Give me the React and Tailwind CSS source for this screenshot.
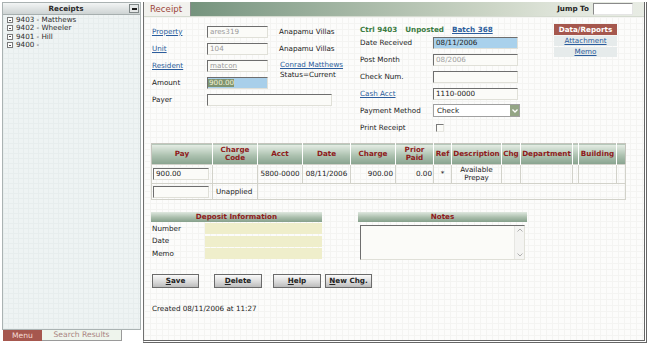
import React from "react";

const insetCls =
  "border border-t-[#6e6e6e] border-l-[#6e6e6e] border-b-[#e0e0d8] border-r-[#e0e0d8]";

function Field({ className = "", children }) {
  return (
    <div
      className={
        "h-[12px] flex items-center px-[2px] whitespace-nowrap overflow-hidden " +
        insetCls +
        " " +
        className
      }
    >
      {children}
    </div>
  );
}

function Link({ children, className = "" }) {
  return <span className={"text-[#2b5c9c] underline " + className}>{children}</span>;
}

function LeftPanel() {
  const items = ["9403 - Matthews", "9402 - Wheeler", "9401 - Hill", "9400 -"];
  return (
    <div className="w-[139px] flex flex-col shrink-0">
      <div className="h-[328px] border border-[#aab2b2] bg-[#eef3f3] bg-[linear-gradient(#e7eded_1px,transparent_1px),linear-gradient(90deg,#e7eded_1px,transparent_1px)] bg-[size:5px_5px]">
        <div className="h-[12px] flex items-center bg-[linear-gradient(#f3f5f5,#cdd3d3)] border-b border-[#a6aeae]">
          <div className="flex-1 text-center font-bold text-[#2a2a2a]">Receipts</div>
          <div className="w-[10px] h-[9px] mr-[1px] bg-[#e4e7e7] border border-[#7f8787] flex items-end justify-center pb-[2px]">
            <div className="w-[5px] h-[2px] bg-[#1e1e1e]" />
          </div>
        </div>
        <div className="pl-[4px] pt-[1px] flex flex-col">
          {items.map((t) => (
            <div key={t} className="h-[8.3px] flex items-center gap-[3px] text-[#2e2e2e]">
              <div className="w-[6px] h-[6px] border border-[#7a7a7a] bg-white flex items-center justify-center">
                <div className="w-[2px] h-[1px] bg-[#555]" />
              </div>
              <span>{t}</span>
            </div>
          ))}
        </div>
      </div>
      <div className="h-[11px] flex pl-[1px] text-[7.6px]">
        <div className="w-[39px] bg-[#a6574e] text-[#f5dcd5] flex items-center justify-center">Menu</div>
        <div className="w-[80px] bg-[#eef4ec] text-[#a98480] border-r border-b border-[#9a9a9a] flex items-center justify-center">
          Search Results
        </div>
      </div>
    </div>
  );
}

const thCls =
  "bg-[linear-gradient(#e6eee6,#adc2b0_55%,#87a28e)] text-[#8e1b1b] font-bold text-center border-r border-white leading-[8px] p-0";
const tdCls = "border border-[#d2d2ca] p-0";
const secHdr =
  "h-[10px] bg-[linear-gradient(#dfe8df,#a9bdab_55%,#85a08b)] text-[#8e1b1b] font-bold flex items-center justify-center";

function Chevron({ up }) {
  return (
    <svg width="6" height="4" viewBox="0 0 6 4">
      <polyline
        points={up ? "0.5,3.5 3,1 5.5,3.5" : "0.5,0.5 3,3 5.5,0.5"}
        fill="none"
        stroke="#b0b0b0"
        strokeWidth="1"
      />
    </svg>
  );
}

function Btn({ w, first, rest, className = "" }) {
  return (
    <div
      className={
        "h-[14px] border border-[#6b6b6b] bg-[linear-gradient(#fafafa,#d8d8d8_60%,#bcbcbc)] font-bold flex items-center justify-center text-[#222] " +
        w +
        " " +
        className
      }
    >
      <span className="underline">{first}</span>
      <span>{rest}</span>
    </div>
  );
}

function MainPanel() {
  return (
    <div className="w-[504px] h-[341px] ml-[2px] flex flex-col border-l border-l-[#6f6f6f] border-r-[3px] border-b-[3px] border-double border-r-[#666] border-b-[#666] shrink-0">
      <div className="h-[15px] shrink-0 flex bg-[linear-gradient(90deg,#668870,#86a08c_20%,#aabba9_45%,#cdd6c7_70%,#e2e7dd_85%,#e8ece4)] border-b border-[#d5dbd0]">
        <div className="w-[47px] bg-[#f2f2ee] border-r border-[#8c8c8c] flex items-center pl-[6px] text-[8.6px] text-[#9d463b]">
          Receipt
        </div>
        <div className="flex-1" />
        <div className="flex items-center pr-[11px]">
          <span className="font-bold text-[#1e1e1e] mr-[4px]">Jump To</span>
          <div className="w-[40px] h-[12px] bg-white border border-t-[#8a8a8a] border-l-[#8a8a8a] border-b-[#e5e5e5] border-r-[#e5e5e5]" />
        </div>
      </div>

      <div className="flex-1 bg-[#fcfcfb] bg-[linear-gradient(#f4f4f2_1px,transparent_1px),linear-gradient(90deg,#f4f4f2_1px,transparent_1px)] bg-[size:6px_6px] pl-[7px]">
        {/* top form */}
        <div className="flex items-start pt-[6px] pl-[1px]">
          <div className="w-[208px] grid grid-cols-[55px_72px_1fr] grid-rows-[17px_17px_17px_17px_17px] items-center">
            <Link>Property</Link>
            <Field className="w-[61px] bg-[#fbfbf8] text-[#9a9a9a]">ares319</Field>
            <span>Anapamu Villas</span>

            <Link>Unit</Link>
            <Field className="w-[61px] bg-[#fbfbf8] text-[#9a9a9a]">104</Field>
            <span>Anapamu Villas</span>

            <Link>Resident</Link>
            <Field className="w-[61px] bg-[#fbfbf8] text-[#9a9a9a]">
              <span className="underline">matcon</span>
            </Field>
            <div className="self-start pt-[4px] flex flex-col pl-[1px]">
              <Link>Conrad Matthews</Link>
              <span className="mt-[2px]">Status=Current</span>
            </div>

            <span>Amount</span>
            <Field className="w-[61px] bg-[#a8cfea] !px-0">
              <span className="bg-[#7f9470] text-[#f2f2d4] pl-[1px]">900.00</span>
            </Field>
            <span />

            <span>Payer</span>
            <Field className="w-[125px] col-span-2 bg-[#fbfbf8]" />
          </div>

          <div className="w-[194px] pt-[3px]">
            <div className="h-[8px] flex items-center font-bold text-[#3b7b42]">
              <span>Ctrl 9403</span>
              <span className="ml-[8px]">Unposted</span>
              <span className="ml-[8px] text-[#2b5c9c] underline">Batch 368</span>
            </div>
            <div className="grid grid-cols-[73px_1fr] grid-rows-[17px_17px_17px_17px_17px_17px] items-center">
              <span>Date Received</span>
              <Field className="w-[85px] bg-[#a9d1ec]">08/11/2006</Field>

              <span>Post Month</span>
              <Field className="w-[85px] bg-[#fbfbf8] text-[#a0a0a0]">08/2006</Field>

              <span>Check Num.</span>
              <Field className="w-[85px] bg-[#fbfbf8]" />

              <Link className="justify-self-start">Cash Acct</Link>
              <Field className="w-[85px] bg-[#fbfbf8]">1110-0000</Field>

              <span>Payment Method</span>
              <div className="w-[87px] h-[13px] bg-white border border-[#a0a0a0] flex items-center justify-between pl-[3px]">
                <span>Check</span>
                <div className="w-[9px] h-[11px] bg-[#94a585] flex items-center justify-center">
                  <svg width="6" height="4" viewBox="0 0 6 4">
                    <polyline points="0.5,0.5 3,3 5.5,0.5" fill="none" stroke="#ffffff" strokeWidth="1.3" />
                  </svg>
                </div>
              </div>

              <span>Print Receipt</span>
              <div className="ml-[3px] w-[8px] h-[8px] bg-[#fbfbf8] border border-t-[#7a7a7a] border-l-[#7a7a7a] border-b-[#e6e6e0] border-r-[#e6e6e0]" />
            </div>
          </div>

          <div className="w-[63px] pt-[1px]">
            <div className="h-[11px] bg-[#a5574d] text-white font-bold flex items-center justify-center">
              Data/Reports
            </div>
            <div className="mt-[1px] h-[10px] bg-[#e6ebeb] flex items-center justify-center">
              <Link>Attachment</Link>
            </div>
            <div className="mt-[1px] h-[10px] bg-[#e6ebeb] flex items-center justify-center">
              <Link>Memo</Link>
            </div>
          </div>
        </div>

        {/* table */}
        <table className="mt-[7px] w-[474px] table-fixed border-collapse border border-[#c4c4bc]">
          <colgroup>
            <col className="w-[61px]" />
            <col className="w-[45px]" />
            <col className="w-[45px]" />
            <col className="w-[48px]" />
            <col className="w-[45px]" />
            <col className="w-[38px]" />
            <col className="w-[18px]" />
            <col className="w-[50px]" />
            <col className="w-[19px]" />
            <col className="w-[52px]" />
            <col className="w-[6px]" />
            <col className="w-[38px]" />
            <col className="w-[9px]" />
          </colgroup>
          <thead>
            <tr className="h-[21px]">
              <th className={thCls}>Pay</th>
              <th className={thCls}>
                Charge
                <br />
                Code
              </th>
              <th className={thCls}>Acct</th>
              <th className={thCls}>Date</th>
              <th className={thCls}>Charge</th>
              <th className={thCls}>
                Prior
                <br />
                Paid
              </th>
              <th className={thCls}>Ref</th>
              <th className={thCls}>Description</th>
              <th className={thCls}>Chg</th>
              <th className={thCls}>Department</th>
              <th className={thCls}></th>
              <th className={thCls}>Building</th>
              <th className="bg-[linear-gradient(#e6eee6,#adc2b0_55%,#87a28e)] p-0"></th>
            </tr>
          </thead>
          <tbody>
            <tr className="h-[19px]">
              <td className={tdCls}>
                <Field className="w-[56px] ml-[1px] bg-[#fbfbf8]">900.00</Field>
              </td>
              <td className={tdCls}></td>
              <td className={tdCls + " text-center"}>5800-0000</td>
              <td className={tdCls + " text-center"}>08/11/2006</td>
              <td className={tdCls + " text-right pr-[2px]"}>900.00</td>
              <td className={tdCls + " text-right pr-[1px]"}>0.00</td>
              <td className={tdCls + " text-center"}>*</td>
              <td className={tdCls + " text-center leading-[8px]"}>
                Available
                <br />
                Prepay
              </td>
              <td className={tdCls}></td>
              <td className={tdCls}></td>
              <td className={tdCls}></td>
              <td className={tdCls}></td>
              <td className={tdCls}></td>
            </tr>
            <tr className="h-[16px]">
              <td className={tdCls}>
                <Field className="w-[56px] ml-[1px] bg-[#fbfbf8]" />
              </td>
              <td className={tdCls + " pl-[3px]"}>Unapplied</td>
              <td className={tdCls} colSpan={11}></td>
            </tr>
          </tbody>
        </table>

        {/* deposit + notes */}
        <div className="mt-[12px] flex items-start">
          <div className="w-[171px]">
            <div className={secHdr}>Deposit Information</div>
            <div className="mt-[1px] flex flex-col gap-[1.5px]">
              {["Number", "Date", "Memo"].map((l) => (
                <div key={l} className="h-[11px] flex items-center">
                  <span className="w-[54px] pl-[1px]">{l}</span>
                  <div className="flex-1 h-full bg-[#efeecb]" />
                </div>
              ))}
            </div>
          </div>
          <div className="ml-[36px] w-[169px]">
            <div className={secHdr}>Notes</div>
            <div
              className={
                "mt-[3px] ml-[2px] w-[165px] h-[35px] bg-[#fbfbf8] flex justify-end " + insetCls
              }
            >
              <div className="w-[10px] h-full bg-[#f4f4f2] border-l border-[#e6e6e2] flex flex-col items-center justify-between py-[2px]">
                <Chevron up />
                <Chevron />
              </div>
            </div>
          </div>
        </div>

        {/* buttons */}
        <div className="mt-[14px] flex pl-[1px]">
          <Btn w="w-[47px]" first="S" rest="ave" />
          <Btn w="w-[48px]" first="D" rest="elete" className="ml-[15px]" />
          <Btn w="w-[48px]" first="H" rest="elp" className="ml-[11px]" />
          <Btn w="w-[47px]" first="N" rest="ew Chg." className="ml-[4px]" />
        </div>

        <div className="mt-[17px] pl-[1px]">Created 08/11/2006 at 11:27</div>
      </div>
    </div>
  );
}

export default function App() {
  return (
    <div className="w-[649px] h-[345px] bg-white flex items-start pt-[2px] pl-[2px] overflow-hidden font-['DejaVu_Sans',sans-serif] text-[7.2px] leading-[8px] text-[#222]">
      <LeftPanel />
      <MainPanel />
    </div>
  );
}
